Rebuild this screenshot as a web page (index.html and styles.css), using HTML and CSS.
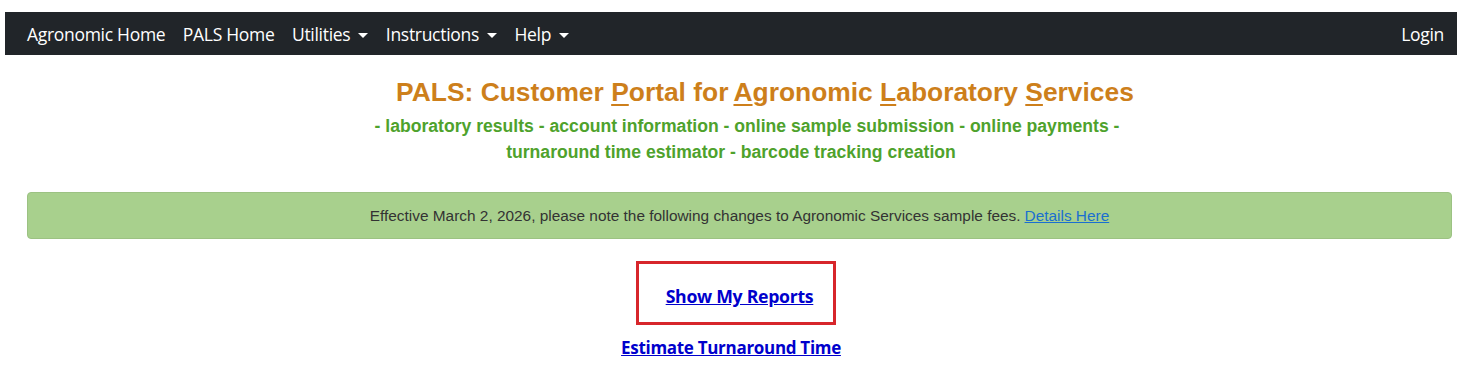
FILE: index.html
```html
<!DOCTYPE html>
<html lang="en">
<head>
<meta charset="utf-8">
<title>PALS</title>
<link rel="stylesheet" href="styles.css">
</head>
<body>
<div class="page">
  <nav class="navbar">
    <ul class="nav-left">
      <li><a href="#">Agronomic Home</a></li>
      <li><a href="#">PALS Home</a></li>
      <li><a href="#" class="dd">Utilities</a></li>
      <li><a href="#" class="dd">Instructions</a></li>
      <li><a href="#" class="dd">Help</a></li>
    </ul>
    <a href="#" class="login">Login</a>
  </nav>
  <header class="hero">
    <h1 class="title">PALS: Customer <u>P</u>ortal for<u class="tight">A</u>gronomic <u>L</u>aboratory <u>S</u>ervices</h1>
    <p class="subtitle"><span class="line1">- laboratory results - account information - online sample submission - online payments -</span><span class="line2">turnaround time estimator - barcode tracking creation</span></p>
  </header>
  <div class="alert">Effective March 2, 2026, please note the following changes to Agronomic Services sample fees. <a href="#">Details Here</a></div>
  <div class="links">
    <div class="highlight"><a href="#">Show My Reports</a></div>
    <a href="#" class="plain">Estimate Turnaround Time</a>
  </div>
</div>
</body>
</html>
```
FILE: styles.css
```css
html, body { margin: 0; padding: 0; background: #fff; }
.page { padding: 12px 23px 0 5px; }
.navbar {
  background: #212529;
  height: 43px;
  display: flex;
  align-items: center;
  justify-content: space-between;
  padding: 0 13px 0 22px;
  font-family: "Open Sans", "Noto Sans", sans-serif;
  font-size: 17.5px;
}
.nav-left { list-style: none; margin: 0; padding: 0; display: flex; gap: 17.5px; }
.navbar a { color: #fff; text-decoration: none; letter-spacing: -0.3px; }
.dd::after {
  content: "";
  display: inline-block;
  margin-left: 8px;
  vertical-align: 3px;
  border-top: 5px solid #fff;
  border-left: 5px solid transparent;
  border-right: 5px solid transparent;
}
.hero { text-align: center; font-family: "Liberation Sans", Arial, sans-serif; font-weight: bold; }
.title { margin: 21px 0 0; padding-left: 68px; font-size: 26.4px; color: #cd7f1b; line-height: 32px; }
.title u { text-underline-offset: 3px; }
.title .tight { margin-left: 5px; }
.subtitle { margin: 5px 0 0; font-size: 17.6px; color: #4ea22c; line-height: 26px; }
.line1 { display: block; padding-left: 32px; }
.line2 { display: block; }
.alert {
  margin: 27px 5px 0 22px;
  height: 45px;
  background: #a8d08d;
  border: 1px solid #9cc283;
  border-radius: 4px;
  display: flex;
  align-items: center;
  justify-content: center;
  font-family: "Liberation Sans", Arial, sans-serif;
  font-size: 15.4px;
  color: #333;
}
.alert a { color: #1a6fd0; margin-left: 4px; }
.links {
  display: flex;
  flex-direction: column;
  align-items: center;
  font-family: "Open Sans", "Noto Sans", sans-serif;
  font-weight: bold;
  font-size: 17px;
}
.links a { color: #0000cc; text-decoration: underline; letter-spacing: -0.3px; }
.highlight {
  margin-top: 22px;
  width: 194px;
  height: 58px;
  border: 3px solid #d7262b;
  display: flex;
  align-items: center;
  justify-content: center;
  margin-left: 9px;
  box-sizing: content-box;
}
.highlight a { font-size: 17.7px; padding-top: 6px; margin-left: 8px; }
.plain { margin-top: 11px; }
```
